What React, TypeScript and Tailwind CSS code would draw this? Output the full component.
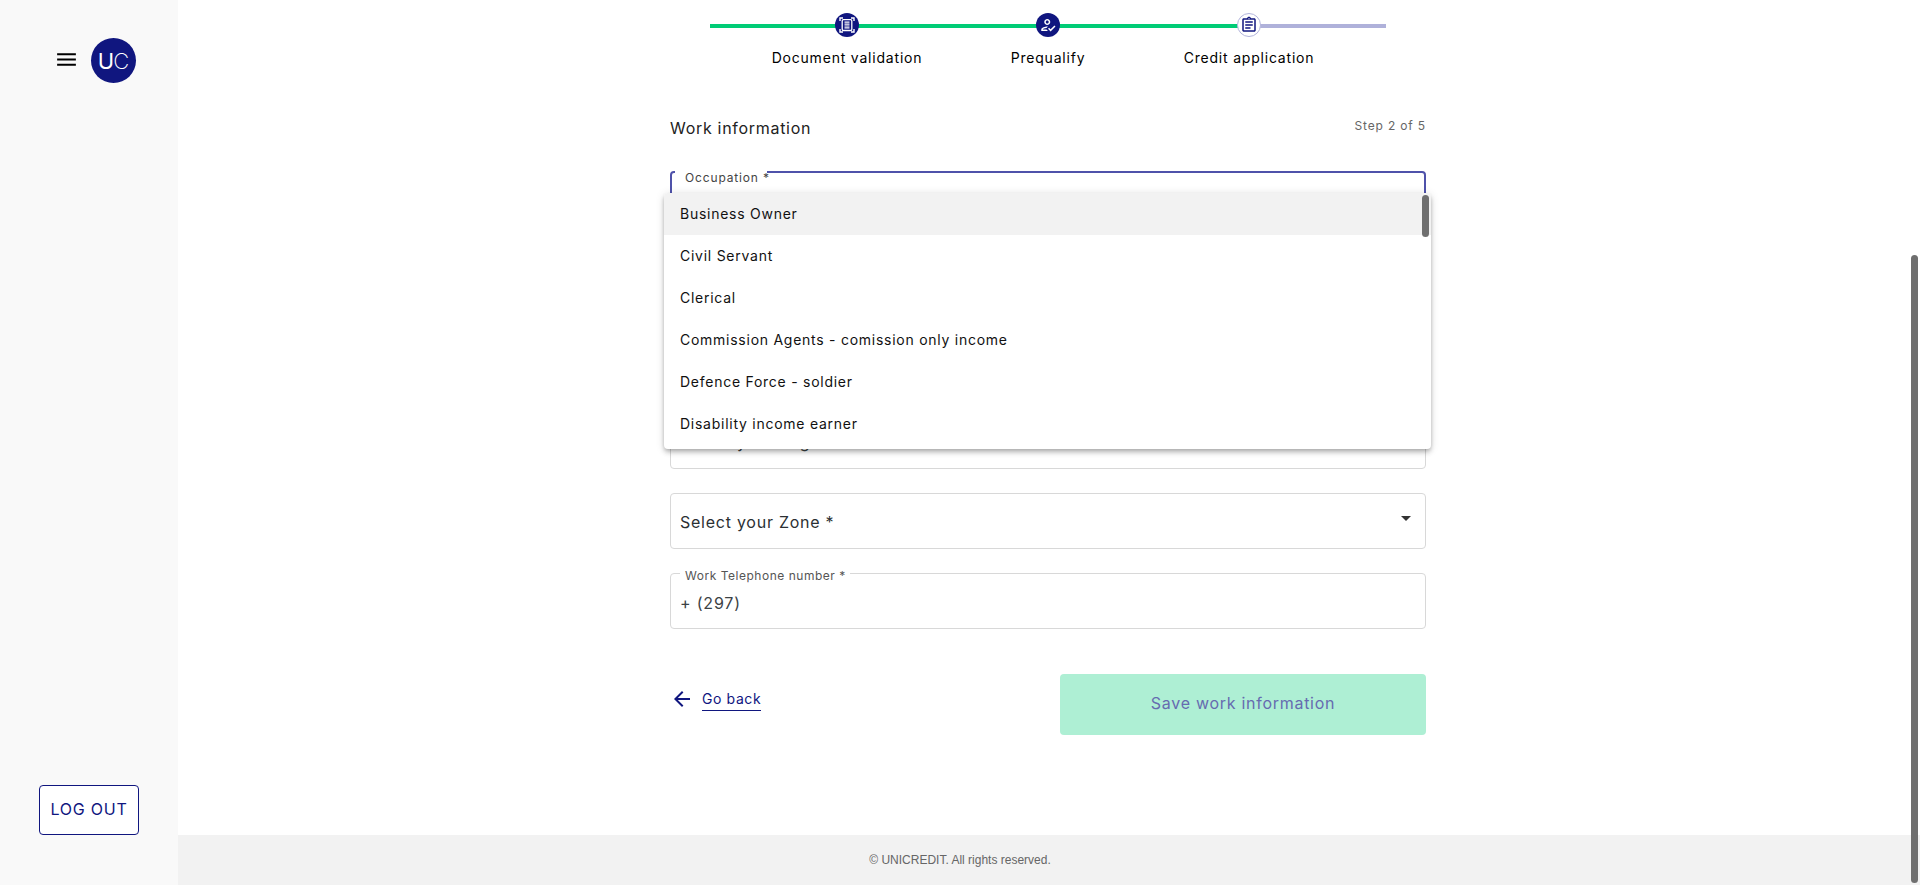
import type { ReactNode } from "react";
import { MdArrowBack, MdMenu, MdOutlineAssignment, MdOutlineHowToReg } from "react-icons/md";

const occupations = [
  "Business Owner",
  "Civil Servant",
  "Clerical",
  "Commission Agents - comission only income",
  "Defence Force - soldier",
  "Disability income earner",
];

function ScanIcon() {
  return (
    <svg className="size-4" viewBox="0 0 16 16" fill="none" stroke="currentColor">
      <path d="M1 4V1h3M12 1h3v3M15 12v3h-3M4 15H1v-3" strokeWidth="1.4" />
      <rect x="3.2" y="2.7" width="9.6" height="10.8" rx="1.2" strokeWidth="1.3" />
      <path d="M5.5 5.2h5M5.5 7.1h5M5.5 9h5M5.5 10.9h5" strokeWidth="1.2" />
    </svg>
  );
}

function Sidebar() {
  return (
    <aside className="flex w-[178px] shrink-0 flex-col justify-between bg-[#f9f9f9]">
      <div className="flex items-center pt-[38px] pl-[54px]">
        <MdMenu className="mb-[3px] size-[25px] text-black" />
        <div className="ml-3 flex size-[45px] items-center justify-center rounded-full bg-[#10167f] text-[22px] leading-none text-white">
          <span>U</span>
          <span className="-ml-px font-extralight">C</span>
        </div>
      </div>
      <button className="mb-[50px] ml-[39px] h-[50px] w-[100px] rounded border border-[#10167f] bg-white pb-0.5 text-base tracking-[0.75px] whitespace-nowrap text-[#10167f]">
        LOG OUT
      </button>
    </aside>
  );
}

function Step({ label, icon, pending }: { label: string; icon: ReactNode; pending?: boolean }) {
  return (
    <div className="flex w-[201px] flex-col items-center">
      <div
        className={
          pending
            ? "flex size-6 items-center justify-center rounded-full border border-[#b3b5dc] bg-white text-[#10167f]"
            : "flex size-6 items-center justify-center rounded-full bg-[#10167f] text-white"
        }
      >
        {icon}
      </div>
      <span className="mt-[9px] text-sm leading-6 tracking-[0.8px] text-black">{label}</span>
    </div>
  );
}

function Stepper() {
  return (
    <div className="relative mt-[13px] flex justify-center">
      <div className="absolute top-[11px] left-[40px] flex h-1 w-[676px]">
        <div className="w-[538px] bg-[#00cc76]" />
        <div className="flex-1 bg-[#afb1da]" />
      </div>
      <div className="relative flex">
        <Step label="Document validation" icon={<ScanIcon />} />
        <Step label="Prequalify" icon={<MdOutlineHowToReg className="size-[18px]" />} />
        <Step label="Credit application" pending icon={<MdOutlineAssignment className="size-[18px]" />} />
      </div>
    </div>
  );
}

function OccupationMenu() {
  return (
    <div className="absolute top-[22px] -left-1.5 h-[256px] w-[767px] overflow-hidden rounded bg-white shadow-[0_2px_4px_-1px_rgba(0,0,0,0.2),0_4px_5px_0_rgba(0,0,0,0.14),0_1px_10px_0_rgba(0,0,0,0.12)]">
      <ul>
        {occupations.map((name) => (
          <li
            key={name}
            className="flex h-[42px] items-center pl-4 text-sm tracking-[0.74px] text-[#111] first:bg-[#f2f2f2]"
          >
            {name}
          </li>
        ))}
      </ul>
      <div className="absolute top-[2px] right-[2px] h-[42px] w-[7px] rounded-full bg-[#6f6f6f]" />
    </div>
  );
}

function Form() {
  return (
    <div className="flex w-[756px] flex-col">
      <Stepper />
      <div className="mt-[46px] flex justify-between">
        <h2 className="mb-px text-base leading-6 tracking-[0.7px] text-[#222]">Work information</h2>
        <span className="text-xs leading-5 tracking-[0.85px] text-[#666]">Step 2 of 5</span>
      </div>

      <div className="relative mt-[30px] h-14 rounded border-2 border-[#4f52aa]">
        <span className="absolute -top-[3px] left-[3px] flex h-4 w-[92px] items-center bg-white pl-[10px] text-xs leading-4 tracking-[0.85px] whitespace-nowrap text-[#444]">
          Occupation *
        </span>
        <div className="absolute -top-[2px] -left-[2px]">
          <OccupationMenu />
        </div>
      </div>

      <div className="mt-[186px] flex flex-col gap-6">
        <div className="flex h-14 items-center rounded border border-[#d8d8d8] pt-px pl-[9px] text-base tracking-[0.75px] text-[#3a3f42]">
          Select your Region *
        </div>
        <div className="flex h-14 items-center justify-between rounded border border-[#d8d8d8] pr-[14px] pl-[9px] text-base tracking-[0.75px] text-[#2b3033]">
          <span className="pt-0.5">Select your Zone *</span>
          <svg className="mb-[5px] h-[5px] w-[10px] fill-[#333]" viewBox="0 0 10 5">
            <path d="M0 0h10L5 5z" />
          </svg>
        </div>
        <div className="relative flex h-14 items-center rounded border border-[#d8d8d8] pt-1 pl-[9px] text-base tracking-[0.8px] text-[#3c4245]">
          <span className="absolute -top-[6px] left-[9px] bg-white pr-1 pl-[5px] text-xs leading-4 tracking-[0.52px] text-[#555]">
            Work Telephone number *
          </span>
          + (297)
        </div>
      </div>

      <div className="mt-[45px] flex items-start justify-between">
        <a className="mt-[13px] flex items-center text-sm text-[#10167f]">
          <MdArrowBack className="size-6" />
          <span className="ml-2 border-b border-[#10167f] pt-[1px] leading-[22px] tracking-[0.6px]">Go back</span>
        </a>
        <button className="h-[61px] w-[366px] rounded bg-[#aeefd4] pb-[3px] text-base tracking-[0.72px] text-[#666bb0]">
          Save work information
        </button>
      </div>
    </div>
  );
}

export default function App() {
  return (
    <div className="relative flex h-[885px] w-full overflow-hidden bg-white font-['Inter',sans-serif]">
      <Sidebar />
      <div className="flex flex-1 flex-col">
        <main className="flex flex-1 justify-center pr-[2px]">
          <Form />
        </main>
        <footer className="flex h-[50px] shrink-0 items-center justify-center bg-[#f2f2f2] pr-[178px] font-['Liberation_Sans',Arial,sans-serif] text-xs text-[#666]">
          © UNICREDIT. All rights reserved.
        </footer>
      </div>
      <div className="absolute right-[2px] bottom-[2px] h-[628px] w-[7px] rounded-full bg-[#6f6f6f]" />
    </div>
  );
}
